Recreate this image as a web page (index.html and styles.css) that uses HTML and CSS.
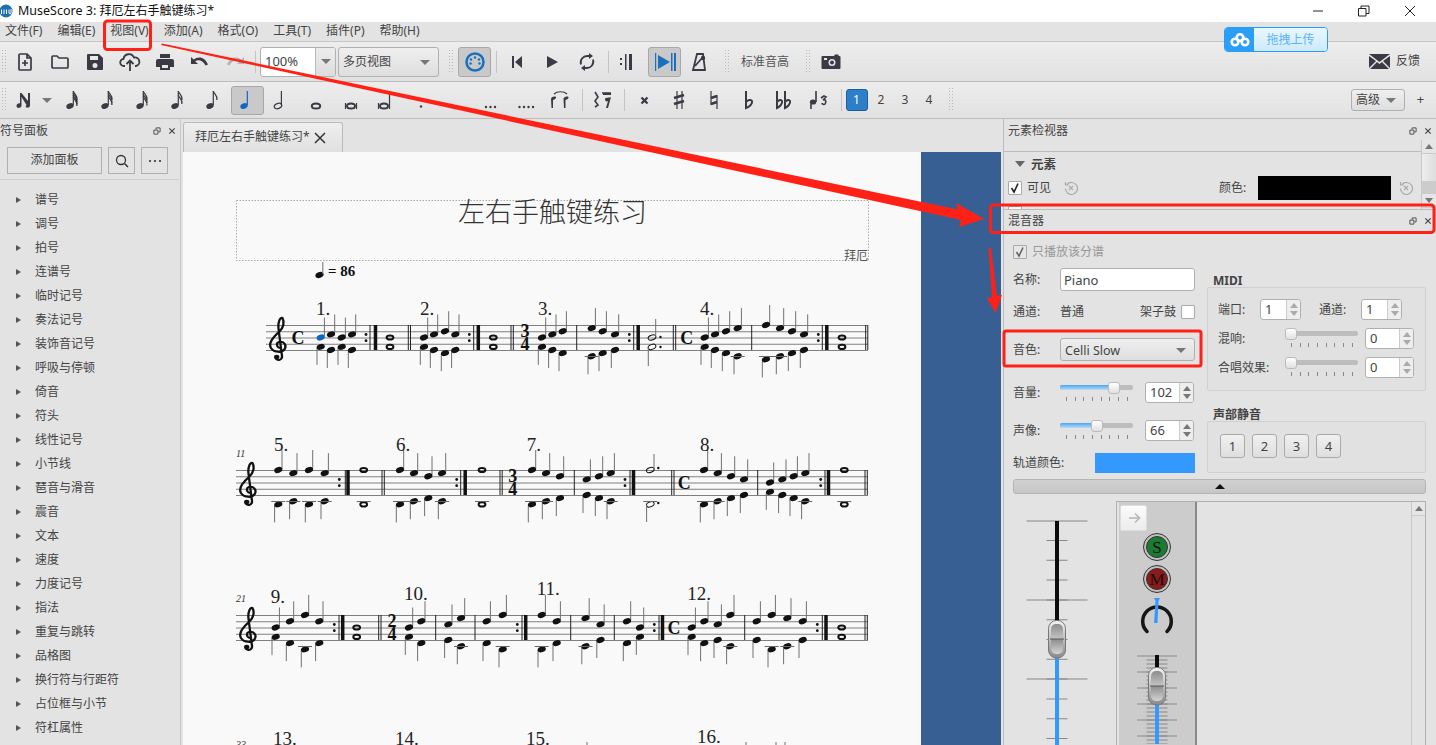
FILE: index.html
```html
<!DOCTYPE html>
<html lang="zh">
<head>
<meta charset="utf-8">
<title>MuseScore 3</title>
<link rel="stylesheet" href="styles.css">
</head>
<body>
<svg class="defs" width="0" height="0">
  <defs>
    <g id="nh"><ellipse cx="6" cy="17" rx="3.800" ry="2.700" transform="rotate(-22 6 17)"/><path d="M9.300 16V2" class="st"/></g>
    <path id="fl" d="M9.300 2c.5 3 4.500 4 3.600 9" class="fl"/>
  </defs>
</svg>
<div class="app">
  <header class="titlebar">
    <svg class="appicon" width="14" height="16" viewBox="0 0 14 16"><circle cx="6" cy="8" r="6.500" fill="#1d6fae"/><path d="M1.500 11V6.500M4 11V6.500M6.500 11V6.500M9 6.500V10c0 1 2 1 2 0V6" fill="none" stroke="#fff" stroke-width="1"/></svg>
    <span class="apptitle">MuseScore 3: <span class="cjk12">拜厄左右手触键练习*</span></span>
    <div class="winctl">
      <svg width="12" height="12" viewBox="0 0 12 12"><path d="M1 6h10" stroke="#222" fill="none"/></svg>
      <svg width="12" height="12" viewBox="0 0 12 12"><path d="M.5 3.500h7.500v7.500h-7.500zM3 3.500V1h8v7.500H8" stroke="#222" fill="none"/></svg>
      <svg width="12" height="12" viewBox="0 0 12 12"><path d="M1 1l10 10M11 1L1 11" stroke="#222" fill="none"/></svg>
    </div>
  </header>

  <nav class="menubar">
    <span class="mi">文件(F)</span><span class="mi">编辑(E)</span><span class="mi">视图(V)</span><span class="mi">添加(A)</span><span class="mi">格式(O)</span><span class="mi">工具(T)</span><span class="mi">插件(P)</span><span class="mi">帮助(H)</span>
  </nav>

  <div class="toolbar tb1">
    <div class="grip g7"></div>
    <div class="tb"><svg width="20" height="20" viewBox="0 0 20 20"><path class="ol" d="M4 3a1 1 0 0 1 1-1h7l4 4v11a1 1 0 0 1-1 1H5a1 1 0 0 1-1-1zM12 2v4h4M10 8v6M7 11h6"/></svg></div>
    <div class="tb"><svg width="20" height="20" viewBox="0 0 20 20"><path class="ol" d="M2 5a1 1 0 0 1 1-1h4l2 2h8a1 1 0 0 1 1 1v8a1 1 0 0 1-1 1H3a1 1 0 0 1-1-1z"/></svg></div>
    <div class="tb"><svg width="20" height="20" viewBox="0 0 20 20"><path class="fi" fill-rule="evenodd" d="M3 2h11l4 4v11a1 1 0 0 1-1 1H3a1 1 0 0 1-1-1V3a1 1 0 0 1 1-1zm2 2v4h8V4zm5 7a2.500 2.500 0 1 0 0 5 2.500 2.500 0 0 0 0-5z"/></svg></div>
    <div class="tb"><svg width="22" height="20" viewBox="0 0 22 20"><path class="ol2" d="M6 14H5a3.500 3.500 0 0 1-.5-7A5.500 5.500 0 0 1 15 5.500a4.200 4.200 0 0 1 2 8.500h-1M11 19V9M7.500 12L11 8.500l3.500 3.500"/></svg></div>
    <div class="tb"><svg width="20" height="20" viewBox="0 0 20 20"><path class="fi" fill-rule="evenodd" d="M5 2h10v4H5zM3 7h14a2 2 0 0 1 2 2v6h-4v3H5v-3H1V9a2 2 0 0 1 2-2zm4 6v3h6v-3z"/></svg></div>
    <div class="tb"><svg width="20" height="16" viewBox="0 0 20 16"><path class="fi" d="M1 3v7h7L5.200 7.300C7.800 5.500 12.500 5.600 15.500 11.500L18 10.500C15 3 8.500 1.700 3.700 5.500z"/></svg></div>
    <div class="tb"><svg width="20" height="16" viewBox="0 0 20 16"><path fill="#b4b4b4" d="M19 3v7h-7l2.800-2.700C12.200 5.500 7.500 5.600 4.500 11.500L2 10.500C5 3 11.500 1.700 16.300 5.500z"/></svg></div>
    <div class="sep ml3"></div>
    <div class="spin big ml4"><span class="spintxt">100%</span><span class="spinarrow"><i class="tri"></i></span></div>
    <div class="combo cview ml2"><span>多页视图</span><i class="tri"></i></div>
    <div class="grip ml8"></div>
    <div class="tb active midi ml3"><svg width="22" height="22" viewBox="0 0 22 22"><circle cx="11" cy="11" r="8.500" fill="none" stroke="#1a6fbe" stroke-width="2.500"/><g fill="#1a6fbe"><circle cx="11" cy="6.500" r="1.200"/><circle cx="7" cy="8.500" r="1.200"/><circle cx="15" cy="8.500" r="1.200"/><circle cx="6.500" cy="12.500" r="1.200"/><circle cx="15.500" cy="12.500" r="1.200"/></g></svg></div>
    <div class="sep ml5"></div>
    <div class="tb ml2"><svg width="14" height="14" viewBox="0 0 14 14"><path class="fi" d="M2 1h2v12H2zM12 1v12L5 7z"/></svg></div>
    <div class="tb"><svg width="14" height="14" viewBox="0 0 14 14"><path class="fi" d="M2 1l11 6-11 6z"/></svg></div>
    <div class="tb"><svg width="18" height="20" viewBox="0 0 18 20"><path class="ol2" d="M3 12.500A6.500 6.500 0 0 1 9.500 4H12M15 7.500A6.500 6.500 0 0 1 8.500 16H6"/><path class="fi" d="M11 1l4 3-4 3zM7 13l-4 3 4 3z"/></svg></div>
    <div class="sep ml4"></div>
    <div class="tb w33"><svg width="14" height="18" viewBox="0 0 14 18"><path class="fi" d="M1 5h2v2H1zM1 10h2v2H1zM6 1h1.500v16H6zM10 1h3v16h-3z"/></svg></div>
    <div class="tb w33 active ml6"><svg width="24" height="20" viewBox="0 0 24 20"><path fill="#1a6fbe" d="M2 1h1.200v18H2zM5 3l12 7-12 7zM18 1h1.500v18H18zM21 1h2v18h-2z"/></svg></div>
    <div class="tb w36"><svg width="16" height="20" viewBox="0 0 16 20"><path class="ol2" d="M6 2h6l2 16H2zM4 14l8-9"/><circle cx="12" cy="6" r="2.200" class="fi"/></svg></div>
    <div class="grip ml6"></div>
    <span class="tbtext ml10">标准音高</span>
    <div class="grip ml15"></div>
    <div class="tb w34 ml2"><svg width="20" height="16" viewBox="0 0 20 16"><path class="fi" fill-rule="evenodd" d="M1.500 2H13l1-1.500h3L18 2h.5a1 1 0 0 1 1 1v11a1 1 0 0 1-1 1h-17a1 1 0 0 1-1-1V3a1 1 0 0 1 1-1zM11 5a3.500 3.500 0 1 0 0 7 3.500 3.500 0 0 0 0-7zM3 4v2h3V4z"/><circle cx="11" cy="8.500" r="2" class="fi"/></svg></div>
    <div class="feedback">
      <svg width="21" height="15" viewBox="0 0 21 15"><path class="fi" d="M0 0h21L10.500 8zM0 2v12l7-7zM21 2v12l-7-7zM8 8l2.500 2L13 8l7 7H1z"/></svg>
      <span>反馈</span>
    </div>
  </div>

  <div class="toolbar tb2">
    <div class="grip"></div>
    <div class="tb w32"><svg width="20" height="20" viewBox="0 0 20 20"><path class="fi" d="M2.500 16c0-2 2-3 3.500-2.500V3h1.500L14 11V3h2v12.500c0 1.600-1.500 2.500-3.500 2-1-.3-1.200-1.700 0-2.600L7.500 7v9c0 2-5 3-5 0z"/></svg></div>
    <div class="tb w14 mr2"><i class="tri"></i></div>
    <div class="tb"><svg class="note" width="18" height="22" viewBox="0 0 18 22"><use href="#nh"/><use href="#fl"/><use href="#fl" y="2"/><use href="#fl" y="4"/><use href="#fl" y="6"/></svg></div>
    <div class="tb"><svg class="note" width="18" height="22" viewBox="0 0 18 22"><use href="#nh"/><use href="#fl"/><use href="#fl" y="2.500"/><use href="#fl" y="5"/></svg></div>
    <div class="tb"><svg class="note" width="18" height="22" viewBox="0 0 18 22"><use href="#nh"/><use href="#fl"/><use href="#fl" y="3"/><use href="#fl" y="5.500"/></svg></div>
    <div class="tb"><svg class="note" width="18" height="22" viewBox="0 0 18 22"><use href="#nh"/><use href="#fl"/><use href="#fl" y="4"/></svg></div>
    <div class="tb"><svg class="note" width="18" height="22" viewBox="0 0 18 22"><use href="#nh"/><use href="#fl"/></svg></div>
    <div class="tb w33 active"><svg class="note blue" width="18" height="22" viewBox="0 0 18 22"><use href="#nh"/></svg></div>
    <div class="tb"><svg width="18" height="22" viewBox="0 0 18 22"><ellipse cx="6" cy="17" rx="3.800" ry="2.600" transform="rotate(-22 6 17)" fill="none" stroke="#3a3a44" stroke-width="1.300"/><path d="M9.400 16V2" class="st2"/></svg></div>
    <div class="tb"><svg width="18" height="22" viewBox="0 0 18 22"><ellipse cx="9" cy="17" rx="4.200" ry="2.600" fill="none" stroke="#3a3a44" stroke-width="2"/></svg></div>
    <div class="tb"><svg width="18" height="22" viewBox="0 0 18 22"><ellipse cx="9" cy="17" rx="4" ry="2.500" fill="none" stroke="#3a3a44" stroke-width="2"/><path d="M3.500 14v6M14.500 14v6" class="st2"/></svg></div>
    <div class="tb"><svg width="18" height="22" viewBox="0 0 18 22"><ellipse cx="7" cy="17" rx="4" ry="2.500" fill="none" stroke="#3a3a44" stroke-width="2"/><path d="M1.500 14v6M12.500 14v6" class="st2"/><path d="M12.500 14V2" class="st2"/></svg></div>
    <div class="tb"><svg width="18" height="22" viewBox="0 0 18 22"><circle cx="9" cy="17.500" r="1.200" class="fi"/></svg></div>
    <div class="tb"><svg width="18" height="22" viewBox="0 0 18 22"><g class="fi"><circle cx="6" cy="18" r="1.200"/><circle cx="11" cy="18" r="1.200"/></g></svg></div>
    <div class="tb"><svg width="18" height="22" viewBox="0 0 18 22"><g class="fi"><circle cx="4" cy="18" r="1.200"/><circle cx="8.500" cy="18" r="1.200"/><circle cx="13" cy="18" r="1.200"/></g></svg></div>
    <div class="tb"><svg width="18" height="22" viewBox="0 0 18 22"><g class="fi"><circle cx="2.500" cy="18" r="1.200"/><circle cx="7" cy="18" r="1.200"/><circle cx="11.500" cy="18" r="1.200"/><circle cx="16" cy="18" r="1.200"/></g></svg></div>
    <div class="tb"><svg width="24" height="20" viewBox="0 0 24 20"><path class="fi" d="M2 9c0-2 3-3 5-2 .5 1-1 2.500-3 3v8H2.500zM14.500 9c0-2 3-3 5-2 .5 1-1 2.500-3 3v8H15z"/><path d="M5 4c3-3 10-3 13 0" class="st2"/></svg></div>
    <div class="sep ml3"></div>
    <div class="tb w40"><svg width="24" height="20" viewBox="0 0 24 20"><path class="st3" d="M4 2l3 5-3 4 3 4-3 2M11 3h9"/><path class="fi" d="M12 3h8v2h-8zM14 9c0-2 5-1 6-2l-3 11h-2l2-7c-1 1-3 .5-3-2z"/></svg></div>
    <div class="sep ml1"></div>
    <div class="tb ml2"><svg width="9" height="9" viewBox="0 0 12 12"><path d="M2 2l8 8M10 2l-8 8" stroke="#3a3a44" stroke-width="3" fill="none"/></svg></div>
    <div class="tb"><svg width="14" height="20" viewBox="0 0 14 20"><path d="M5 1v18M10 1v18" class="st2"/><path d="M2 8l10-3M2 14l10-3" stroke="#3a3a44" stroke-width="2.600" fill="none"/></svg></div>
    <div class="tb"><svg width="12" height="20" viewBox="0 0 12 20"><path d="M3 1v14M9 5v14" class="st2"/><path d="M3 8l6-2M3 14l6-2" stroke="#3a3a44" stroke-width="2.400" fill="none"/></svg></div>
    <div class="tb"><svg width="12" height="20" viewBox="0 0 12 20"><path d="M3 1v17c3-1 7-4 6-7-1-2-4-1-6 1" fill="none" stroke="#3a3a44" stroke-width="2"/></svg></div>
    <div class="tb"><svg width="20" height="20" viewBox="0 0 20 20"><path d="M3 1v17c2-1 6-4 5-7-1-2-3-1-5 1M11 1v17c2-1 6-4 5-7-1-2-3-1-5 1" fill="none" stroke="#3a3a44" stroke-width="2"/></svg></div>
    <div class="tb"><svg width="20" height="20" viewBox="0 0 20 20"><ellipse cx="4" cy="12" rx="3.200" ry="2.600" class="fi"/><path d="M2 14v5M7 12V1" class="st3"/><path d="M12 8l3-2 2 1-3 3c2-1 4 1 2 4-1 1-3 0-3-1" fill="none" stroke="#3a3a44" stroke-width="1.600"/></svg></div>
    <div class="sep ml4"></div>
    <div class="voice on ml4">1</div><div class="voice v2">2</div><div class="voice">3</div><div class="voice">4</div>
    <div class="grip ml6"></div>
    <div class="adv"><div class="combo cadv"><span>高级</span><i class="tri"></i></div><span class="plus">+</span></div>
  </div>

  <main class="main">
    <aside class="palette">
      <div class="ptitle"><span>符号面板</span><span class="dockicons"><svg width="8" height="8" viewBox="0 0 9 9"><path d="M1 3.500h4.500V8H1zM3.500 3V1H8v4.500H6" fill="none" stroke="#444"/></svg><svg width="8" height="8" viewBox="0 0 9 9"><path d="M1.500 1.500l6 6M7.500 1.500l-6 6" stroke="#444" stroke-width="1.300"/></svg></span></div>
      <div class="pbtns">
        <button class="pbtn padd">添加面板</button>
        <button class="pbtn psq"><svg width="16" height="16" viewBox="0 0 16 16"><circle cx="7" cy="7" r="4.500" fill="none" stroke="#333" stroke-width="1.300"/><path d="M10.500 10.500L14 14" stroke="#333" stroke-width="1.500"/></svg></button>
        <button class="pbtn psq"><svg width="16" height="6" viewBox="0 0 16 6"><g fill="#333"><circle cx="3" cy="3" r="1.100"/><circle cx="8" cy="3" r="1.100"/><circle cx="13" cy="3" r="1.100"/></g></svg></button>
      </div>
      <ul class="plist">
        <li>谱号</li><li>调号</li><li>拍号</li><li>连谱号</li><li>临时记号</li><li>奏法记号</li><li>装饰音记号</li><li>呼吸与停顿</li><li>倚音</li><li>符头</li><li>线性记号</li><li>小节线</li><li>琶音与滑音</li><li>震音</li><li>文本</li><li>速度</li><li>力度记号</li><li>指法</li><li>重复与跳转</li><li>品格图</li><li>换行符与行距符</li><li>占位框与小节</li><li>符杠属性</li>
      </ul>
    </aside>

    <section class="center">
      <div class="tabs"><div class="tab"><span>拜厄左右手触键练习*</span><svg width="12" height="12" viewBox="0 0 12 12"><path d="M1 1l10 10M11 1L1 11" stroke="#333" stroke-width="1.500"/></svg></div></div>
      <div class="canvas">
        <svg id="score" class="score" width="738" height="593" viewBox="183 152 738 593">
          <rect class="frame" x="236.500" y="200.500" width="632" height="60"/>
          <text class="stitle" x="552.500" y="222" text-anchor="middle">左右手触键练习</text>
          <text class="scomposer" x="868" y="260" text-anchor="end">拜厄</text>
        </svg>
        <div class="backdrop"></div>
      </div>
    </section>

    <aside class="rightdock">
      <div class="inspector">
        <div class="dtitle t21"><span>元素检视器</span><span class="dockicons"><svg width="8" height="8" viewBox="0 0 9 9"><path d="M1 3.500h4.500V8H1zM3.500 3V1H8v4.500H6" fill="none" stroke="#444"/></svg><svg width="8" height="8" viewBox="0 0 9 9"><path d="M1.500 1.500l6 6M7.500 1.500l-6 6" stroke="#444" stroke-width="1.300"/></svg></span></div>
        <div class="ibody">
          <div class="icol">
            <div class="ihead"><i class="tri lg"></i><b>元素</b></div>
            <div class="irow">
              <span class="check on"><svg width="12" height="12" viewBox="0 0 12 12"><path d="M2.500 6l2.500 4 4-8.500" fill="none" stroke="#222" stroke-width="1.600"/></svg></span>
              <span class="lbl">可见</span>
              <svg class="reset" width="14" height="14" viewBox="0 0 14 14"><path d="M3 3.500a6 6 0 1 1-1.500 4M1.500 1v3h3M5 5l4 4M9 5L5 9" fill="none" stroke="#aaa" stroke-width="1.200"/></svg>
              <span class="lbl colorlbl">颜色:</span>
              <span class="swatch"></span>
              <svg class="reset r2" width="14" height="14" viewBox="0 0 14 14"><path d="M3 3.500a6 6 0 1 1-1.500 4M1.500 1v3h3M5 5l4 4M9 5L5 9" fill="none" stroke="#aaa" stroke-width="1.200"/></svg>
            </div>
            <div class="irow2"><span class="check"></span></div>
          </div>
          <div class="vscroll"><span class="sbtn"><i class="tri up"></i></span><span class="sgap"></span><span class="sthumb"></span><span class="sbtn"><i class="tri"></i></span></div>
        </div>
      </div>

      <div class="mixer">
        <div class="dtitle mtitle"><span>混音器</span><span class="dockicons"><svg width="8" height="8" viewBox="0 0 9 9"><path d="M1 3.500h4.500V8H1zM3.500 3V1H8v4.500H6" fill="none" stroke="#444"/></svg><svg width="8" height="8" viewBox="0 0 9 9"><path d="M1.500 1.500l6 6M7.500 1.500l-6 6" stroke="#444" stroke-width="1.300"/></svg></span></div>
        <div class="mbody">
          <div class="mgrid">
            <div class="mleft">
              <div class="mrow h21"><span class="check dim"><svg width="12" height="12" viewBox="0 0 12 12"><path d="M2.500 6l2.500 4 4-8.500" fill="none" stroke="#666" stroke-width="1.600"/></svg></span><span class="dimtxt">只播放该分谱</span></div>
              <div class="mrow h23 mt6"><span class="flbl">名称:</span><span class="input">Piano</span></div>
              <div class="mrow h22 mt10"><span class="flbl">通道:</span><span class="plain">普通</span><span class="drumlbl">架子鼓</span><span class="check wh"></span></div>
              <div class="mrow h23 mt15"><span class="flbl">音色:</span><div class="combo csound"><span>Celli Slow</span><i class="tri"></i></div></div>
              <div class="mrow h21 mt21"><span class="flbl">音量:</span><div class="slider"><div class="groove"><div class="fill" style="width:54px"><span class="handle"></span></div></div><div class="ticks"></div></div><div class="spin sp49 ml12"><span class="spintxt">102</span><span class="arrows"><i class="tri up"></i><i class="tri"></i></span></div></div>
              <div class="mrow h21 mt17"><span class="flbl">声像:</span><div class="slider"><div class="groove"><div class="fill" style="width:37px"><span class="handle"></span></div></div><div class="ticks"></div></div><div class="spin sp49 ml12"><span class="spintxt">66</span><span class="arrows"><i class="tri up"></i><i class="tri"></i></span></div></div>
              <div class="mrow h20 mt12"><span class="colorrow">轨道颜色:</span><span class="trackcolor"></span></div>
            </div>
            <div class="mright">
              <div class="legend lmidi">MIDI</div>
              <div class="group gmidi">
                <div class="grow"><span class="glbl">端口:</span><div class="spin sp41"><span class="spintxt">1</span><span class="arrows dimarrow"><i class="tri up"></i><i class="tri"></i></span></div><span class="glbl ml18">通道:</span><div class="spin sp41"><span class="spintxt">1</span><span class="arrows dimarrow"><i class="tri up"></i><i class="tri"></i></span></div></div>
                <div class="grow"><span class="glbl2">混响:</span><div class="slider"><div class="groove"><div class="fill none"><span class="handle"></span></div></div><div class="ticks"></div></div><div class="spin sp49 ml7"><span class="spintxt">0</span><span class="arrows dimarrow"><i class="tri up"></i><i class="tri"></i></span></div></div>
                <div class="grow"><span class="glbl2">合唱效果:</span><div class="slider"><div class="groove"><div class="fill none"><span class="handle"></span></div></div><div class="ticks"></div></div><div class="spin sp49 ml7"><span class="spintxt">0</span><span class="arrows dimarrow"><i class="tri up"></i><i class="tri"></i></span></div></div>
              </div>
              <div class="legend lmute">声部静音</div>
              <div class="group gmute"><span class="vbtn">1</span><span class="vbtn">2</span><span class="vbtn">3</span><span class="vbtn">4</span></div>
            </div>
          </div>
          <div class="collapse"><i class="tri up black"></i></div>
          <div class="mbottom">
            <svg class="master" width="103" height="251" viewBox="0 0 103 251">
              <defs>
                <g id="fader"><rect x=".5" y=".5" width="17" height="37.500" rx="8" fill="url(#fg1)" stroke="#777"/><rect x="3" y="4" width="12" height="30" rx="5" fill="url(#fg2)"/><path d="M2 19h14" stroke="#555" stroke-width="1"/></g>
                <linearGradient id="fg1" x1="0" y1="0" x2="0" y2="1"><stop offset="0" stop-color="#f4f4f4"/><stop offset="1" stop-color="#8a8a8a"/></linearGradient>
                <linearGradient id="fg2" x1="0" y1="0" x2="0" y2="1"><stop offset="0" stop-color="#8d8d8d"/><stop offset=".5" stop-color="#c4c4c4"/><stop offset=".5" stop-color="#8d8d8d"/><stop offset="1" stop-color="#d4d4d4"/></linearGradient>
              </defs>
              <line x1="44" x2="44" y1="26.500" y2="251" stroke="#888" stroke-width="61" stroke-dasharray="1 78"/>
              <line x1="44" x2="44" y1="46" y2="251" stroke="#888" stroke-width="21" stroke-dasharray="1 18.800"/>
              <rect x="42" y="27" width="4" height="100" fill="#0c0c0c"/>
              <rect x="42" y="160" width="4" height="91" fill="#3399ff"/>
              <use href="#fader" x="35" y="126"/>
            </svg>
            <div class="stripbox">
              <div class="strip">
                <button class="stripbtn"><svg width="14" height="14" viewBox="0 0 14 14"><path d="M2 7h10M8 2.500L12.500 7 8 11.500" fill="none" stroke="#b4b4b4" stroke-width="1.500"/></svg></button>
                <svg class="stripsvg" width="76" height="213" viewBox="0 0 76 213">
                  <circle cx="38" cy="16" r="13.500" fill="#c0c0c0" stroke="#333"/><circle cx="38" cy="16" r="10.500" fill="#1d7a33" stroke="#333"/>
                  <text class="smbtn" x="38" y="21.500" text-anchor="middle">S</text>
                  <circle cx="38" cy="48" r="13.500" fill="#c0c0c0" stroke="#333"/><circle cx="38" cy="48" r="10.500" fill="#8c1a1a" stroke="#333"/>
                  <text class="smbtn" x="38" y="53.500" text-anchor="middle">M</text>
                  <path d="M28 100.500a14.300 14.300 0 1 1 20 0" fill="none" stroke="#161616" stroke-width="3.500" stroke-linecap="round"/>
                  <path d="M35 67h6l-1.500 3-1 22h-3.500l1.500-22z" fill="#3399ff"/>
                  <line x1="38" x2="38" y1="124.500" y2="213" stroke="#888" stroke-width="40" stroke-dasharray="1 15"/>
                  <line x1="38" x2="38" y1="128.500" y2="213" stroke="#888" stroke-width="21" stroke-dasharray="1 3"/>
                  <rect x="36" y="124" width="4" height="13" fill="#0c0c0c"/>
                  <rect x="36" y="172" width="4" height="41" fill="#3399ff"/>
                  <use href="#fader" x="29" y="136"/>
                </svg>
              </div>
              <div class="stripfill"></div>
              <div class="vscroll s2"><span class="sbtn"><i class="tri up"></i></span></div>
            </div>
          </div>
        </div>
      </div>
    </aside>
  </main>

  <div class="upload">
    <span class="upicon"><svg width="20" height="14" viewBox="0 0 20 14"><g fill="none" stroke="#fff" stroke-width="2.600"><circle cx="5" cy="9" r="3.300"/><circle cx="15" cy="9" r="3.300"/><circle cx="10" cy="4.500" r="3.300"/></g></svg></span>
    <span class="uptext">拖拽上传</span>
  </div>

  <svg class="marks" width="1436" height="745" viewBox="0 0 1436 745">
    <rect x="104.500" y="21" width="46" height="28.500" rx="3"/>
    <rect x="990.500" y="205" width="443.500" height="27.500" rx="3"/>
    <rect x="1004" y="331" width="197" height="35" rx="2"/>
    <path class="arrow" d="M162 43.500L958 209.500 956 203 984 219 959 227 961 220 161 45z"/>
    <path class="arrow" d="M988.500 248L991 248 997 296 1002 295 995.500 313 987 298 992 297z"/>
  </svg>
</div>
<script src="score.js"></script>
</body>
</html>
```
FILE: styles.css
```css
* { box-sizing: border-box; }
html, body { margin: 0; padding: 0; }
body {
  width: 1436px; height: 745px; overflow: hidden;
  font: 12px/1.2 "Noto Sans", "Noto Sans CJK SC", sans-serif;
  color: #444;
  background: #e3e3e3;
}
button { font: inherit; color: inherit; }
.defs { position: absolute; }
.app { position: relative; width: 1436px; height: 745px; display: flex; flex-direction: column; overflow: hidden; }

.titlebar { height: 22px; background: #fff; display: flex; align-items: center; color: #111; font-size: 12.500px; }
.cjk12 { font-size: 12px; }
.appicon { flex: none; margin-right: 4px; }
.winctl { margin-left: auto; display: flex; gap: 34px; padding-right: 20px; align-items: center; height: 18px; }

.menubar { height: 20px; background: #e3e3e3; border-bottom: 1px solid #c6c6c6; display: flex; padding-left: 5px; align-items: center; gap: 15px; }
.mi { flex: none; }

.toolbar { display: flex; align-items: center; background: linear-gradient(#ededed, #e1e1e1); border-bottom: 1px solid #bdbdbd; flex: none; }
.tb1 { height: 40px; position: relative; }
.tb2 { height: 37px; }
.grip { width: 8px; height: 24px; flex: none; background: repeating-linear-gradient(#b9b9b9 0 1px, transparent 1px 3px) 2px 0 / 1px 100% no-repeat, repeating-linear-gradient(#b9b9b9 0 1px, transparent 1px 3px) 5px 0 / 1px 100% no-repeat; }
.grip.g7 { width: 7px; }
.tb { width: 35px; height: 30px; flex: none; display: flex; align-items: center; justify-content: center; border-radius: 3px; }
.tb2 .tb { height: 29px; }
.tb.w32 { width: 32px; } .tb.w33 { width: 33px; } .tb.w34 { width: 34px; } .tb.w36 { width: 36px; } .tb.w40 { width: 40px; } .tb.w14 { width: 14px; }
.tb.midi { width: 33px; }
.active { background: #c9c9c9; border: 1px solid #a8a8a8; }
.sep { width: 1px; height: 22px; background: #c4c4c4; flex: none; }
.ml1 { margin-left: 1px; } .ml2 { margin-left: 2px; } .ml3 { margin-left: 3px; } .ml4 { margin-left: 4px; } .ml5 { margin-left: 5px; } .ml6 { margin-left: 6px; } .ml7 { margin-left: 7px; } .ml8 { margin-left: 8px; } .ml10 { margin-left: 10px; } .ml12 { margin-left: 12px; } .ml15 { margin-left: 15px; } .ml18 { margin-left: 18px; }
.mr2 { margin-right: 1.500px; }
.ol { fill: none; stroke: #3a3a44; stroke-width: 1.700; }
.ol2 { fill: none; stroke: #3a3a44; stroke-width: 1.800; }
.fi { fill: #3a3a44; }
.st { stroke: currentColor; stroke-width: 1.200; fill: none; }
.fl { stroke: currentColor; stroke-width: 1.300; fill: none; }
.st2 { stroke: #3a3a44; stroke-width: 1.200; fill: none; }
.st3 { stroke: #3a3a44; stroke-width: 1.600; fill: none; }
.note { fill: #3a3a44; color: #3a3a44; }
.note.blue { fill: #0f66c4; color: #0f66c4; }
.tbtext { width: 48px; flex: none; color: #555; white-space: nowrap; padding-top: 1px; }
.feedback { margin-left: auto; padding-right: 16px; display: flex; align-items: center; gap: 6px; font-size: 12px; }

.tri { display: block; width: 0; height: 0; border-left: 5px solid transparent; border-right: 5px solid transparent; border-top: 5px solid #777; flex: none; }
.tri.up { border-top: 0; border-bottom: 5px solid #777; }
.tri.black { border-bottom-color: #111; }
.tri.lg { border-top-width: 6px; border-top-color: #666; }

.spin { display: flex; height: 21px; background: #fff; border: 1px solid #b0b0b0; border-radius: 3px; align-items: center; flex: none; overflow: hidden; }
.spintxt { flex: 1; padding: 1px 0 0 4px; font-size: 13px; }
.big { width: 76px; height: 30px; }
.spinarrow { width: 20px; height: 100%; background: linear-gradient(#ededed, #dcdcdc); border-left: 1px solid #b8b8b8; display: flex; align-items: center; justify-content: center; }
.sp49 { width: 49px; }
.sp41 { width: 41px; }
.arrows { width: 14px; height: 100%; border-left: 1px solid #ccc; background: #eee; display: flex; flex-direction: column; align-items: center; justify-content: space-evenly; }
.arrows .tri { border-left-width: 4px; border-right-width: 4px; }
.dimarrow .tri { border-top-color: #aaa; border-bottom-color: #aaa; }
.combo { display: flex; align-items: center; justify-content: space-between; height: 30px; border: 1px solid #b0b0b0; border-radius: 3px; background: linear-gradient(#efefef, #dedede); padding: 1px 8px 0 4px; flex: none; }
.cview { width: 101px; }
.cadv { width: 54px; height: 22px; }
.csound { width: 135px; height: 23px; padding-left: 4px; font-size: 12.500px; }
.voice { width: 24px; height: 22px; flex: none; text-align: center; line-height: 22px; font-size: 12px; }
.voice.on { width: 22px; background: #2e7fca; border: 1px solid #1c5e9e; border-radius: 3px; color: #fff; line-height: 20px; }
.voice.v2 { margin-left: 1.500px; }
.adv { margin-left: auto; display: flex; align-items: center; }
.plus { width: 31px; text-align: center; font-size: 13px; }

.main { flex: 1; display: flex; min-height: 0; }
.palette { width: 181px; flex: none; border-right: 1px solid #c8c8c8; margin-right: 2px; overflow: hidden; }
.ptitle { height: 24px; display: flex; align-items: center; justify-content: space-between; padding-right: 4px; }
.dockicons { display: flex; gap: 7px; align-items: center; }
.pbtns { display: flex; padding: 4px 0 0 7px; height: 37px; border-bottom: 1px solid #cfcfcf; gap: 6px; margin-right: 1px; }
.pbtn { height: 27px; border: 1px solid #b0b0b0; background: #e3e3e3; padding: 0; display: flex; align-items: center; justify-content: center; }
.padd { width: 95px; font-size: 12px; }
.psq { width: 27px; }
.plist { list-style: none; margin: 0; padding: 8px 0 0 35px; }
.plist li { height: 24px; line-height: 24px; position: relative; }
.plist li::before { content: ""; position: absolute; left: -19px; top: 9px; border-top: 3px solid transparent; border-bottom: 3px solid transparent; border-left: 5px solid #555; }

.center { width: 818px; flex: none; margin-right: 2px; display: flex; flex-direction: column; }
.tabs { height: 33px; flex: none; padding-top: 3px; }
.tab { width: 160px; height: 30px; border: 1px solid #bbb; border-bottom: 0; border-radius: 3px 3px 0 0; background: linear-gradient(#eee, #e0e0e0); display: flex; align-items: center; padding: 0 16px 0 11px; justify-content: space-between; }
.canvas { flex: 1; display: flex; min-height: 0; overflow: hidden; }
.score { display: block; flex: none; background: #f9f9f9; }
.backdrop { flex: 1; background: #385f94; }
.frame { fill: none; stroke: #aaa; stroke-dasharray: 1.500 1.500; }
.stitle { font: 300 27px "Noto Sans CJK SC", sans-serif; fill: #333; }
.scomposer { font: 12px "Noto Sans CJK SC", sans-serif; fill: #555; }
.num { font: 19px "Liberation Serif", serif; fill: #222; }
.sysno { font: italic 10px "Liberation Serif", serif; fill: #333; }
.tempo { font: bold 15px "Liberation Serif", serif; fill: #111; }
.tsig { font: bold 18px "Liberation Serif", serif; fill: #111; }
.csig { font: bold 18px "Liberation Serif", serif; fill: #111; }

.rightdock { width: 433px; flex: none; border-left: 1px solid #bcbcbc; display: flex; flex-direction: column; }
.inspector { height: 90px; flex: none; overflow: hidden; }
.dtitle { display: flex; align-items: center; justify-content: space-between; padding: 0 4px 0 4px; }
.t21 { height: 21px; padding-top: 3px; }
.ibody { display: flex; height: 69px; }
.icol { flex: 1; margin-top: 11px; border-top: 1px solid #bcbcbc; padding-left: 4px; }
.ihead { height: 24px; display: flex; align-items: center; padding-left: 7px; gap: 6px; font-size: 12.500px; }
.irow { height: 24px; display: flex; align-items: center; }
.irow2 { padding-top: 6px; }
.check { width: 14px; height: 14px; border: 1px solid #aaa; background: #fff; display: inline-flex; align-items: center; justify-content: center; flex: none; border-radius: 1px; }
.check.dim { background: #e6e6e6; }
.lbl { margin-left: 5px; }
.reset { margin-left: 13px; flex: none; }
.reset.r2 { margin-left: 8px; }
.colorlbl { margin-left: 141px; width: 38px; }
.swatch { width: 133px; height: 24px; background: #000; margin-left: 1px; flex: none; }
.vscroll { width: 15px; flex: none; display: flex; flex-direction: column; border-left: 1px solid #c8c8c8; }
.sbtn { height: 14px; display: flex; align-items: center; justify-content: center; background: #e6e6e6; border-bottom: 1px solid #ccc; flex: none; }
.sbtn .tri { border-left-width: 4px; border-right-width: 4px; }
.sgap { height: 27px; background: linear-gradient(90deg, #eee, #ddd); flex: none; }
.sthumb { height: 13px; background: #ccc; flex: none; }

.mixer { flex: 1; min-height: 0; display: flex; flex-direction: column; }
.mtitle { height: 23px; border-top: 1px solid #bcbcbc; flex: none; }
.mbody { flex: 1; min-height: 0; padding: 9px 10px 0 9px; display: flex; flex-direction: column; overflow: hidden; }
.mgrid { display: flex; flex: none; }
.mleft { width: 182px; flex: none; }
.mright { width: 219px; margin-left: 12px; flex: none; padding-top: 31px; }
.mrow { display: flex; align-items: center; }
.h20 { height: 20px; } .h21 { height: 21px; } .h22 { height: 22px; } .h23 { height: 23px; }
.mt6 { margin-top: 6px; } .mt10 { margin-top: 10px; } .mt12 { margin-top: 12px; } .mt15 { margin-top: 15px; } .mt17 { margin-top: 17px; } .mt21 { margin-top: 21px; }
.dimtxt { margin-left: 5px; color: #999; padding-top: 1px; }
.flbl { width: 47px; flex: none; padding-top: 1px; }
.plain { padding-top: 1px; }
.input { width: 135px; height: 23px; background: #fff; border: 1px solid #b0b0b0; border-radius: 3px; padding-left: 3px; line-height: 22px; font-size: 13px; flex: none; }
.drumlbl { margin-left: 56px; width: 41px; padding-top: 1px; }
.check.wh { background: #fff; }
.slider { width: 73px; height: 21px; flex: none; position: relative; }
.groove { position: absolute; left: 0; right: 0; top: 3px; height: 5px; background: #bdbdbd; border-radius: 2px; }
.fill { position: relative; height: 5px; border-radius: 2px; background: linear-gradient(#4ea4ee, #bcdcf6); }
.fill.none { width: 6px; background: none; }
.handle { position: absolute; right: -6px; top: -3px; width: 12px; height: 12px; background: linear-gradient(#fff, #e0e0e0); border: 1px solid #bbb; border-radius: 3px; }
.ticks { position: absolute; left: 6px; top: 15px; width: 62px; height: 4px; background: repeating-linear-gradient(90deg, #888 0 1px, transparent 1px 8.700px); }
.colorrow { width: 82px; flex: none; padding-top: 1px; }
.trackcolor { width: 100px; height: 20px; background: #3399ff; flex: none; }
.legend { font-weight: 700; height: 15px; line-height: 17px; padding-left: 6px; color: #444; }
.lmute { margin-top: 15px; }
.group { border: 1px solid #d0d0d0; background: #e1e1e1; border-radius: 2px; }
.gmidi { height: 104px; padding: 11px 10px 0 10px; display: flex; flex-direction: column; gap: 8px; }
.gmute { height: 52px; padding: 12px 0 0 12px; display: flex; gap: 7px; }
.grow { display: flex; align-items: center; height: 21px; }
.glbl { width: 42px; flex: none; padding-top: 1px; }
.glbl2 { width: 67px; flex: none; padding-top: 1px; }
.vbtn { width: 25px; height: 24px; border: 1px solid #aaa; border-radius: 3px; background: linear-gradient(#f0f0f0, #dedede); text-align: center; line-height: 22px; font-size: 13px; flex: none; }
.collapse { height: 15px; margin-top: 6px; flex: none; background: linear-gradient(#d2d2d2, #c6c6c6); border: 1px solid #b4b4b4; border-radius: 3px; display: flex; align-items: center; justify-content: center; }
.mbottom { flex: 1; min-height: 0; display: flex; }
.master { display: block; flex: none; }
.stripbox { margin-top: 7px; width: 310px; height: 244px; flex: none; border: 1px solid #b0b0b0; border-bottom: 0; display: flex; padding-left: 2px; }
.strip { width: 78px; flex: none; background: #ccc; border-right: 2px solid #8a8a8a; display: flex; flex-direction: column; padding: 3px 0 0 1px; }
.stripbtn { width: 27px; height: 26px; padding: 0; border: 1px solid #ddd; border-radius: 2px; background: linear-gradient(#fbfbfb, #ececec); display: flex; align-items: center; justify-content: center; flex: none; }
.stripsvg { display: block; flex: none; margin-left: -1px; }
.smbtn { font: 17px "Liberation Serif", serif; fill: #111; }
.stripfill { flex: 1; }
.s2 { width: 14px; }

.upload { position: absolute; left: 1224px; top: 27px; width: 104px; height: 25px; border: 1px solid #2b9cf5; border-radius: 4px; display: flex; overflow: hidden; }
.upicon { width: 29px; background: #2b9ef5; display: flex; align-items: center; justify-content: center; }
.uptext { flex: 1; background: linear-gradient(#eaf7fe, #cdeafc); color: #5bb5f5; text-align: center; line-height: 23px; font-size: 12px; }

.marks { position: absolute; left: 0; top: 0; pointer-events: none; }
.marks rect { fill: none; stroke: #ff2116; stroke-width: 3; }
.marks .arrow { fill: #ff2116; stroke: none; }

.staff { stroke: #808080; stroke-width: 1; }
.bar { stroke: #222; stroke-width: 1; }
.thick { stroke: #111; stroke-width: 3.500; }
.stem { stroke: #707070; stroke-width: 1; }
.ledger { stroke: #666; stroke-width: 1; }
.head { fill: #111; }
.hollow { fill: none; stroke: #111; stroke-width: 2; }
.half { fill: none; stroke: #111; stroke-width: 1; }
.clef { fill: none; stroke: #111; stroke-width: 2; }
```
FILE: score.js
```js
(function () {
  var svg = document.getElementById('score');
  var out = '';
  var STEP = 3.125;

  function line(x1, y1, x2, y2, c) {
    out += '<line class="' + c + '" x1="' + x1 + '" y1="' + y1 + '" x2="' + x2 + '" y2="' + y2 + '"/>';
  }
  function text(c, x, y, t, anchor) {
    out += '<text class="' + c + '" x="' + x + '" y="' + y + '"' + (anchor ? ' text-anchor="middle"' : '') + '>' + t + '</text>';
  }
  function head(x, y, fill) {
    out += '<ellipse class="head" cx="' + x + '" cy="' + y + '" rx="4.200" ry="2.900" transform="rotate(-20 ' + x + ' ' + y + ')"' + (fill ? ' style="fill:' + fill + '"' : '') + '/>';
  }
  function whole(x, y) {
    out += '<ellipse class="hollow" cx="' + x + '" cy="' + y + '" rx="3.400" ry="2.100"/>';
  }
  function half(x, y) {
    out += '<ellipse class="half" cx="' + x + '" cy="' + y + '" rx="4" ry="2.400" transform="rotate(-20 ' + x + ' ' + y + ')"/>';
  }
  function clef(x, y) {
    out += '<g transform="translate(' + x + ' ' + y + ') scale(1.150 1)"><path class="clef" d="M1.500 4C-2 4-3-1 0-2 4-3 7 1 5 5 3 9-4 9-7 4-9 0-6-6 0-12 4-16 5-22 3-26 1-27-1-22-.5-16L2.500 11C3.500 16-2 18-3 13.500"/><circle class="head" cx="-2" cy="13" r="2.300"/></g>';
  }
  function ledger(x, top, s) {
    if (s >= 10) line(x - 7, top + 31.5, x + 7, top + 31.5, 'ledger');
  }
  function pair(top, n) {
    var x = n[0], up = top + n[1] * STEP, dn = top + n[2] * STEP;
    line(x + 3.7, up - 1, x + 3.7, up - 20, 'stem');
    head(x, up, n[3]);
    line(x - 3.7, dn + 1, x - 3.7, dn + 18, 'stem');
    head(x, dn);
    ledger(x, top, n[2]);
  }
  function rep(top, x) {
    out += '<circle class="head" cx="' + x + '" cy="' + (top + 9.5) + '" r="1.400"/><circle class="head" cx="' + x + '" cy="' + (top + 15.7) + '" r="1.400"/>';
  }
  function thickRepeat(top, dots, thin, thick) {
    rep(top, dots);
    line(thin, top, thin, top + 25, 'bar');
    line(thick, top, thick, top + 25, 'thick');
  }
  function dbl(top, a, b) {
    line(a, top, a, top + 25, 'bar');
    line(b, top, b, top + 25, 'bar');
  }
  function bar(top, x) { line(x, top, x, top + 25, 'bar'); }
  function staff(top, x1, x2) {
    for (var i = 0; i < 5; i++) line(x1, top + 0.5 + i * 6.25, x2, top + 0.5 + i * 6.25, 'staff');
  }
  function wholes(top, x, a, b) {
    whole(x, top + a * STEP); whole(x, top + b * STEP);
    if (b >= 10) ledger(x, top, b);
  }
  function tsig(top, x, a, b) {
    text('tsig', x, top + 12, a, true);
    text('tsig', x, top + 25, b, true);
  }
  function csig(top, x) { text('csig', x, top + 19, 'C', true); }

  /* System 1 */
  var t = 325;
  staff(t, 266, 868);
  clef(279, t + 19);
  csig(t, 298);
  [[320.7,4,7,'#0f66c4'],[331,3,8],[341.7,4,7],[352,3,8],
   [424,4,7],[434,3,8],[445,2,9],[455.3,3,8],
   [542,4,7],[552.3,3,8],[562.7,2,9],
   [591.7,1,10],[602.7,2,9],[615,3,8],
   [704.7,4,7],[715,3,8],[726,2,9],[737.7,1,10],
   [766,0,11],[780,1,10],[792,2,9],[804,3,8]].forEach(function (n) { pair(t, n); });
  thickRepeat(t, 366, 370, 375.5); wholes(t, 390, 4, 7); dbl(t, 408.3, 410.5);
  thickRepeat(t, 469.3, 473.7, 478.3); wholes(t, 493.3, 4, 7); dbl(t, 511, 513.3);
  tsig(t, 525, 3, 4);
  bar(t, 576.7);
  thickRepeat(t, 629.3, 633.7, 638.2);
  half(652, t + 4 * STEP); half(652, t + 7 * STEP);
  line(655.7, t + 12, 655.7, t - 6, 'stem'); line(648.3, t + 23, 648.3, t + 41, 'stem');
  out += '<circle class="head" cx="660.5" cy="' + (t + 12) + '" r="1.200"/><circle class="head" cx="660.5" cy="' + (t + 22) + '" r="1.200"/>';
  dbl(t, 673.3, 675.7);
  csig(t, 686.7);
  bar(t, 751.7);
  thickRepeat(t, 818.3, 822.3, 826.8); wholes(t, 842, 4, 7); dbl(t, 865.7, 867.8);
  text('num', 316, 314.7, '1.'); text('num', 420, 314.7, '2.'); text('num', 538, 314.7, '3.'); text('num', 700, 314.7, '4.');
  head(319.5, 275); line(322.8, 274, 322.8, 262, 'stem');
  text('tempo', 328, 276, '= 86');

  /* System 2 */
  t = 470;
  staff(t, 236, 868);
  clef(249, t + 19);
  [[278.3,0,11],[293.3,1,10],[309,0,11],[324.7,1,10],
   [400,0,11],[414,1,10],[428.3,2,9],[442,1,10],
   [532,0,11],[546,1,10],[560,2,9],
   [586.7,3,8],[599,2,9],[610.7,1,10],
   [704,0,11],[717.7,1,10],[731,2,9],[744,3,8],
   [770,4,7],[782.3,3,8],[793.7,2,9],[805.3,1,10]].forEach(function (n) { pair(t, n); });
  thickRepeat(t, 339.3, 345.3, 348); wholes(t, 363.7, 0, 11); dbl(t, 382, 384.3);
  thickRepeat(t, 456.7, 460.7, 465.2); wholes(t, 482, 0, 11); dbl(t, 500, 502.2);
  tsig(t, 512.7, 3, 4);
  bar(t, 574.3);
  thickRepeat(t, 625, 630, 633.5);
  half(650.3, t); half(650.3, t + 11 * STEP); ledger(650.3, t, 11);
  line(654, t, 654, t - 16, 'stem'); line(646.6, t + 35, 646.6, t + 52, 'stem');
  out += '<circle class="head" cx="658.3" cy="' + (t - 2) + '" r="1.200"/><circle class="head" cx="658.3" cy="' + (t + 33) + '" r="1.200"/>';
  dbl(t, 671.7, 674);
  csig(t, 684.3);
  bar(t, 757.7);
  thickRepeat(t, 820.7, 825, 828.5); wholes(t, 844.3, 0, 11); dbl(t, 865, 867.3);
  text('sysno', 236, 457, '11');
  text('num', 274, 450.7, '5.'); text('num', 396, 450.7, '6.'); text('num', 526.7, 450.7, '7.'); text('num', 700, 450.7, '8.');

  /* System 3 */
  t = 615;
  staff(t, 236, 868);
  clef(249, t + 19);
  [[275.7,4,7],[290,2,9],[305,0,11],[319.3,2,9],
   [409,4,7],[421.3,2,9],[448.3,3,8],[461,1,10],[486.7,2,9],[502.7,0,11],
   [541.7,0,11],[556.7,2,9],[585.5,1,10],[600.5,3,8],[627,2,9],[640,4,7],
   [691.7,4,7],[704.3,2,9],[717.7,3,8],[730.3,0,10],
   [756.7,2,8],[771.7,0,11],[787.3,1,10],[802.7,2,8]].forEach(function (n) { pair(t, n); });
  thickRepeat(t, 334.3, 339, 342.7); wholes(t, 356.7, 4, 7); dbl(t, 378.7, 381);
  tsig(t, 392, 2, 4);
  bar(t, 435.7); bar(t, 475);
  thickRepeat(t, 517.3, 522, 525.7);
  bar(t, 570.7); bar(t, 614.3);
  thickRepeat(t, 654.3, 659, 662.5);
  csig(t, 674);
  bar(t, 744.7);
  thickRepeat(t, 817.3, 822.3, 826); wholes(t, 841.7, 4, 7); dbl(t, 865, 867.3);
  text('sysno', 236, 602, '21');
  text('num', 270.7, 603, '9.'); text('num', 404, 600, '10.'); text('num', 536.7, 595, '11.'); text('num', 687.3, 600, '12.');

  /* System 4, cut off by the bottom edge */
  text('sysno', 236, 748, '33');
  text('num', 273, 745, '13.'); text('num', 395, 745, '14.'); text('num', 526, 745, '15.'); text('num', 697, 743, '16.');
  [[587,742],[746,742],[776,742],[785,742]].forEach(function (s) { line(s[0], s[1], s[0], 745, 'stem'); });

  svg.insertAdjacentHTML('beforeend', out);
})();
```
